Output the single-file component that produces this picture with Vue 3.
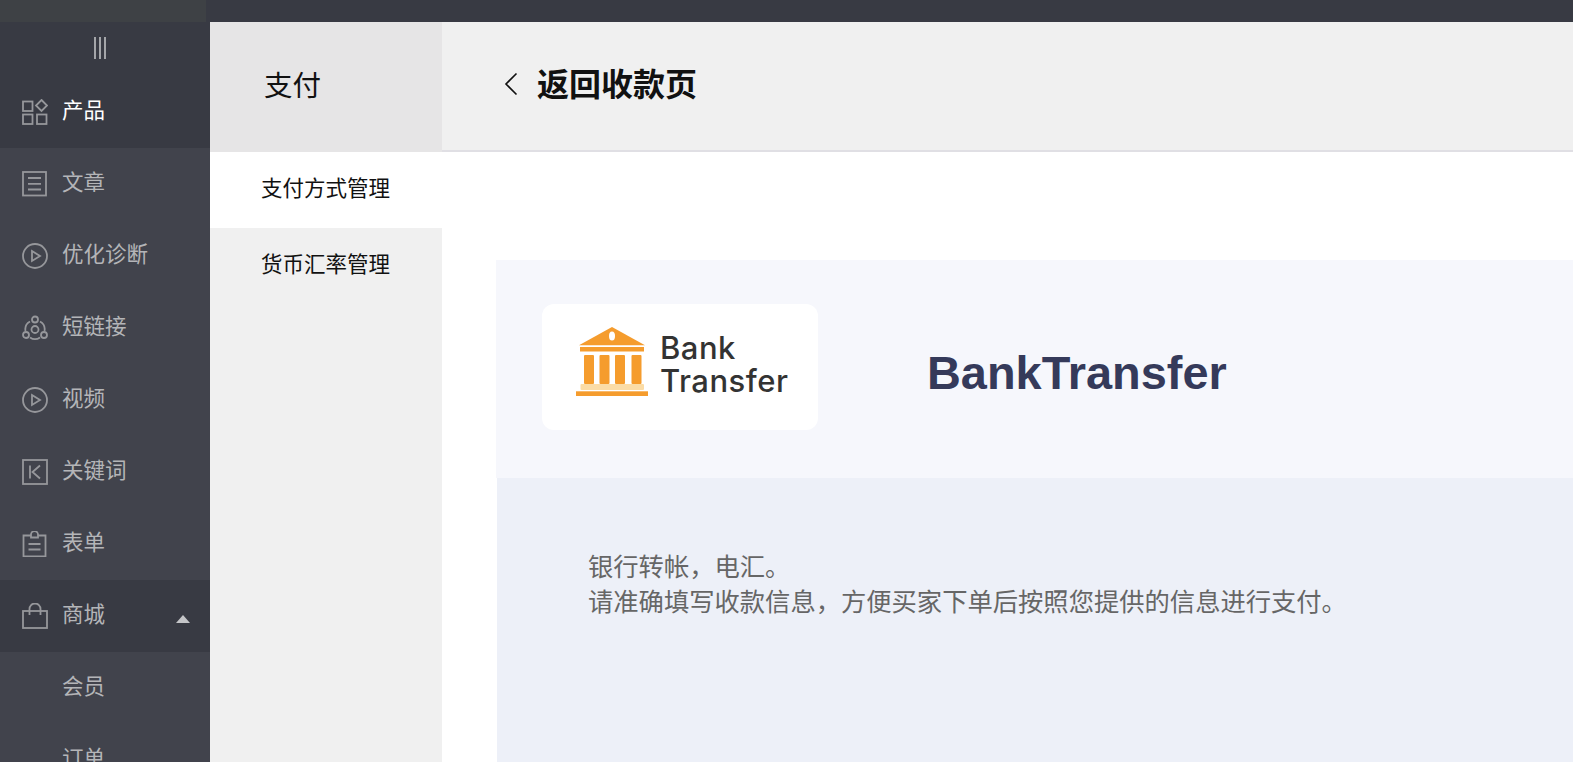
<script setup>
const menu = [
  { label: '产品', icon: 'grid', active: true },
  { label: '文章', icon: 'doc' },
  { label: '优化诊断', icon: 'play' },
  { label: '短链接', icon: 'link' },
  { label: '视频', icon: 'play' },
  { label: '关键词', icon: 'key' },
  { label: '表单', icon: 'form' },
  { label: '商城', icon: 'bag', open: true },
  { label: '会员', sub: true },
  { label: '订单', sub: true }
]
</script>

<template>
  <div class="page">
    <div class="topbar">
      <div class="brand"></div>
    </div>
    <div class="body">
      <aside class="sidebar">
        <div class="collapse"><i></i><i></i><i></i></div>
        <div
          v-for="item in menu"
          :key="item.label"
          class="menu-item"
          :class="{ active: item.active, open: item.open, sub: item.sub }"
        >
          <svg v-if="item.icon" class="menu-icon" viewBox="0 0 26 26" fill="none" stroke="currentColor" stroke-width="1.8">
            <template v-if="item.icon === 'grid'">
              <rect x="1" y="2.500" width="9.500" height="9.500" />
              <path d="M19.500 1l5.500 5.500-5.500 5.500-5.500-5.500z" />
              <rect x="1" y="15.500" width="9.500" height="9.500" />
              <rect x="15" y="15.500" width="9.500" height="9.500" />
            </template>
            <template v-else-if="item.icon === 'doc'">
              <rect x="1" y="1" width="23" height="23.500" />
              <path d="M6 7h13M6 12.800h13M6 18.500h13" />
            </template>
            <template v-else-if="item.icon === 'play'">
              <circle cx="13" cy="13" r="12" />
              <path d="M10 8l8 5-8 5z" />
            </template>
            <template v-else-if="item.icon === 'link'">
              <path d="M8 6.500a9 9 0 0 0-4.500 9.500M18 6.500a9 9 0 0 1 4.500 9.500M8 22.500a9 9 0 0 0 10 0" />
              <circle cx="13" cy="14.500" r="3.500" />
              <circle cx="13" cy="4.500" r="3" />
              <circle cx="4" cy="20" r="3" />
              <circle cx="22" cy="20" r="3" />
            </template>
            <template v-else-if="item.icon === 'key'">
              <rect x="1" y="1" width="24" height="24" />
              <path d="M8 6.500v13M18 6.500l-7.500 6.500 7.500 6.500" />
            </template>
            <template v-else-if="item.icon === 'form'">
              <path d="M9 4.500H1.500v21h22v-21H16" />
              <path d="M9 6.500V3.500a3.500 3.500 0 0 1 7 0v3z" />
              <path d="M6.500 13h12M6.500 18.500h12" />
            </template>
            <template v-else>
              <rect x="1" y="8" width="24" height="17" />
              <path d="M7.500 12V6a5.500 5.500 0 0 1 11 0v6" />
            </template>
          </svg>
          <span>{{ item.label }}</span>
          <b v-if="item.open" class="caret"></b>
        </div>
      </aside>

      <nav class="subnav">
        <div class="subnav-title">支付</div>
        <div class="subnav-item current">支付方式管理</div>
        <div class="subnav-item">货币汇率管理</div>
      </nav>

      <main class="main">
        <header class="main-head">
          <svg class="back" viewBox="0 0 14 24" fill="none" stroke="#111" stroke-width="1.600">
            <path d="M12.500 1.500L2 12l10.500 10.500" />
          </svg>
          <h1>返回收款页</h1>
        </header>
        <section class="content">
          <div class="pay-head">
            <div class="logo-card">
              <svg class="bank" viewBox="0 0 72 69">
                <path d="M36 0L69 18.300H3z" fill="#f59c2d" />
                <ellipse cx="36" cy="9" rx="3" ry="4.500" fill="#fff" />
                <rect x="4" y="20" width="64" height="4.500" fill="#f59c2d" />
                <rect x="8" y="28" width="10" height="29" rx="1" fill="#f59c2d" />
                <rect x="23.500" y="28" width="10" height="29" rx="1" fill="#f59c2d" />
                <rect x="39" y="28" width="10" height="29" rx="1" fill="#f59c2d" />
                <rect x="55.500" y="28" width="10" height="29" rx="1" fill="#f59c2d" />
                <rect x="4.500" y="57" width="63.500" height="6" rx="1" fill="#fbdca6" />
                <rect x="0" y="64.300" width="72" height="4.700" fill="#f59c2d" />
              </svg>
              <div class="logo-text">Bank<br />Transfer</div>
            </div>
            <h2>BankTransfer</h2>
          </div>
          <div class="pay-desc">
            <p>银行转帐，电汇。</p>
            <p>请准确填写收款信息，方便买家下单后按照您提供的信息进行支付。</p>
          </div>
        </section>
      </main>
    </div>
  </div>
</template>

<style>
html, body {
  margin: 0;
  height: 100%;
  overflow: hidden;
}
</style>

<style scoped>
.page {
  width: 1573px;
  height: 762px;
  overflow: hidden;
  display: flex;
  flex-direction: column;
  font-family: "Liberation Sans", "Noto Sans CJK SC", sans-serif;
}

.topbar {
  height: 22px;
  flex: none;
  background: #383a43;
}

.brand {
  width: 206px;
  height: 22px;
  background: #3e4145;
}

.body {
  flex: 1;
  min-height: 0;
  display: flex;
}

.sidebar {
  width: 210px;
  flex: none;
  background: #41434c;
  color: #b4b5b8;
  overflow: hidden;
}

.collapse {
  height: 54px;
  background: #383a43;
  display: flex;
  justify-content: center;
  gap: 3px;
  padding: 15px 10px 0 0;
  box-sizing: border-box;
}

.collapse i {
  width: 2px;
  height: 22px;
  background: #a4a5a9;
}

.menu-item {
  height: 72px;
  display: flex;
  align-items: center;
  padding-left: 22px;
  font-size: 21.500px;
  position: relative;
}

.menu-item span {
  padding-bottom: 8px;
}

.menu-item.active {
  background: #383a43;
  color: #fff;
}

.menu-item.open {
  background: #383a43;
}

.menu-item.sub {
  padding-left: 62px;
}

.menu-icon {
  width: 26px;
  height: 26px;
  margin-right: 14px;
  color: #96979b;
  flex: none;
}

.caret {
  position: absolute;
  right: 20px;
  top: 35px;
  border-left: 7px solid transparent;
  border-right: 7px solid transparent;
  border-bottom: 8px solid #c4c5c8;
}

.subnav {
  width: 232px;
  flex: none;
  background: #f0f0f0;
}

.subnav-title {
  height: 130px;
  background: #e6e5e6;
  display: flex;
  align-items: center;
  padding: 0 0 8px 54px;
  box-sizing: border-box;
  font-size: 28.500px;
  color: #111;
}

.subnav-item {
  height: 76px;
  display: flex;
  align-items: center;
  padding: 0 0 8px 51px;
  box-sizing: border-box;
  font-size: 21.500px;
  color: #111;
}

.subnav-item.current {
  background: #fff;
}

.main {
  flex: 1;
  min-width: 0;
  background: #fff;
}

.main-head {
  height: 130px;
  box-sizing: border-box;
  background: #f0f0f0;
  border-bottom: 2px solid #e0dfe4;
  display: flex;
  align-items: center;
  padding: 0 0 8px 62px;
}

.back {
  width: 14px;
  height: 24px;
  margin: 4px 19px 0 0;
}

.main-head h1 {
  margin: 0;
  font-size: 32px;
  font-weight: 700;
  color: #111;
}

.content {
  padding: 108px 0 0 54px;
}

.pay-head {
  height: 214px;
  background: #f6f7fc;
  display: flex;
  align-items: center;
  padding: 0 0 4px 46px;
}

.logo-card {
  width: 276px;
  height: 126px;
  background: #fff;
  border-radius: 12px;
  display: flex;
  align-items: center;
  padding-left: 34px;
  box-sizing: border-box;
}

.bank {
  width: 72px;
  height: 69px;
  margin: 0 12px 12px 0;
}

.logo-text {
  font-family: "Inter", "Liberation Sans", sans-serif;
  font-size: 31px;
  font-weight: 500;
  letter-spacing: 0.5px;
  line-height: 33px;
  color: #333;
  margin-bottom: 7px;
}

.pay-head h2 {
  margin: 12px 0 0 109px;
  font-size: 46.900px;
  font-weight: 700;
  color: #353a5a;
}

.pay-desc {
  margin-left: 1px;
  height: 300px;
  background: #edf0f8;
  padding: 72px 0 0 91px;
  font-size: 25.300px;
  line-height: 35px;
  color: #666;
}

.pay-desc p {
  margin: 0;
}
</style>
